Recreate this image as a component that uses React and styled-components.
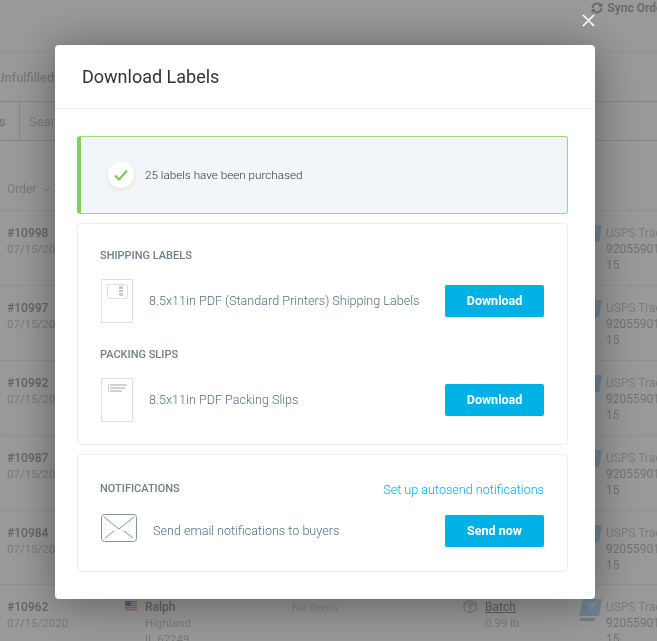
import React from "react";
import styled, { createGlobalStyle } from "styled-components";

const GlobalStyle = createGlobalStyle`
  html, body {
    margin: 0;
    height: 100%;
    overflow: hidden;
    background: #fff;
    font-family: "Roboto", "Liberation Sans", sans-serif;
  }
`;

const Page = styled.div`
  height: 641px;
  overflow: hidden;
  filter: blur(0.6px);
`;
const TopBar = styled.div`
  display: flex;
  justify-content: flex-end;
  gap: 4px;
  height: 52px;
  box-sizing: border-box;
  padding-top: 1px;
  border-bottom: 1px solid #f2f2f2;
  margin-right: -16px;
  font-size: 12px;
  line-height: 14px;
  font-weight: 700;
  color: #b0b0b0;
  white-space: nowrap;
`;
const Tabs = styled.div`
  height: 49px;
  padding-top: 18px;
  box-sizing: border-box;
  font-size: 13px;
  line-height: 16px;
  color: #c0c0c0;
  text-indent: -4px;
`;
const FilterBar = styled.div`
  display: flex;
  height: 40px;
  box-sizing: border-box;
  border-top: 1px solid #e2e2e2;
  border-bottom: 1px solid #e2e2e2;
  font-size: 13px;
  color: #d0d0d0;
`;
const FilterTab = styled.div`
  width: 20px;
  box-sizing: border-box;
  border-right: 1px solid #e2e2e2;
  line-height: 40px;
  color: #bbb;
  text-indent: -1px;
`;
const SearchText = styled.div`
  padding-left: 9px;
  line-height: 40px;
`;
const TableHead = styled.div`
  display: flex;
  height: 70px;
  box-sizing: border-box;
  padding: 40px 0 0 7px;
  font-size: 12px;
  line-height: 16px;
  color: #c8c8c8;
  border-bottom: 1px solid #efefef;
`;
const HeadCell = styled.span`
  display: flex;
  align-self: flex-start;
  align-items: center;
  gap: 6px;
`;
const Row = styled.div`
  display: grid;
  grid-template-columns: 118px 20px 147px 171px 22px 94px 27px 1fr;
  height: 74.9px;
  box-sizing: border-box;
  padding: 14px 0 0 7px;
  border-bottom: 1px solid #efefef;
  font-size: 11.5px;
  line-height: 16px;
  color: #cacaca;
  white-space: nowrap;
`;
const OrderNo = styled.div`
  font-size: 12px;
  font-weight: 500;
  color: #a8a8a8;
`;
const NoItems = styled.div`
  color: #d8d8d8;
`;
const Batch = styled.div`
  font-size: 12px;
  color: #a0a0a0;
  text-decoration: underline;
`;
const Tracking = styled.div`
  font-size: 12px;
  color: #cfcfcf;
`;
const TrackingNo = styled.div`
  font-size: 12px;
  color: #bdbdbd;
`;

const Overlay = styled.div`
  position: fixed;
  inset: 0;
  background: rgba(0, 0, 0, 0.4);
  display: flex;
  align-items: flex-start;
  padding: 45px 62px 0 55px;
  box-sizing: border-box;
`;
const Close = styled.button`
  position: absolute;
  top: 14px;
  right: 62px;
  width: 13px;
  height: 13px;
  padding: 0;
  border: 0;
  background: none;
  display: flex;
`;
const Modal = styled.div`
  width: 540px;
  height: 554px;
  background: #fff;
  border-radius: 4px;
  box-shadow: 0 4px 44px rgba(0, 0, 0, 0.42);
  overflow: hidden;
`;
const ModalHeader = styled.div`
  height: 64px;
  box-sizing: border-box;
  border-bottom: 1px solid #eef0f4;
  padding: 21px 27px 0;
`;
const Title = styled.h2`
  margin: 0;
  font-size: 18px;
  line-height: 22px;
  font-weight: 400;
  color: #333;
`;
const ModalBody = styled.div`
  padding: 27px 27px 0 22px;
  display: flex;
  flex-direction: column;
  gap: 9px;
`;
const Alert = styled.div`
  height: 78px;
  box-sizing: border-box;
  display: flex;
  align-items: center;
  gap: 11px;
  padding: 0 0 0 27px;
  background: #f1f6fa;
  border: 1px solid #99dc6c;
  border-left: 4px solid #86d04f;
  border-radius: 3px;
  font-size: 11.7px;
  font-weight: 300;
  color: #333;
`;
const AlertText = styled.span`
  margin-bottom: 1px;
`;
const CheckCircle = styled.div`
  width: 26px;
  height: 26px;
  border-radius: 50%;
  background: #fff;
  display: flex;
  align-items: center;
  justify-content: center;
  box-shadow: 0 2px 4px rgba(240, 200, 150, 0.45);
`;
const Card = styled.div`
  border: 1px solid #eeeeee;
  border-radius: 4px;
  padding: ${(p) => p.$pad}px 23px 0;
  box-sizing: border-box;
  height: ${(p) => p.$height}px;
`;
const SectionHead = styled.div`
  display: flex;
  justify-content: space-between;
  align-items: center;
  height: 18px;
  margin-top: ${(p) => p.$top || 0}px;
`;
const SectionLabel = styled.div`
  font-size: 11px;
  line-height: 18px;
  font-weight: 500;
  color: #6f818c;
  text-transform: uppercase;
  margin-left: -1px;
`;
const AutoLink = styled.a`
  font-size: 12.6px;
  font-weight: 300;
  color: #00b1e6;
`;
const ItemRow = styled.div`
  display: flex;
  align-items: center;
  height: ${(p) => p.$height}px;
  margin-top: ${(p) => p.$top}px;
`;
const Doc = styled.svg`
  flex: none;
  margin-right: 16px;
`;
const Mail = styled.svg`
  flex: none;
  margin: 0 16px 7px 0;
`;
const ItemText = styled.div`
  flex: 1;
  font-size: 12.6px;
  font-weight: 300;
  color: #4f7285;
  white-space: nowrap;
  margin-bottom: 2px;
`;
const Action = styled.button`
  flex: none;
  width: 99px;
  height: 32px;
  padding: 0 0 2px;
  border: 0;
  border-radius: 2px;
  background: #00b1e6;
  color: #fff;
  font-family: inherit;
  font-size: 12.5px;
  font-weight: 700;
`;

const orders = ["#10998", "#10997", "#10992", "#10987", "#10984", "#10962"];

const Flag = () => (
  <svg width="12" height="10" viewBox="0 0 12 10" style={{ marginTop: 2 }}>
    <rect width="12" height="10" fill="#e8b4b4" />
    <path d="M0 1.5h12M0 3.5h12M0 5.5h12M0 7.5h12M0 9.5h12" stroke="#f2e6e6" />
    <rect width="6" height="5" fill="#9c9cc8" />
  </svg>
);

const UspsLogo = () => (
  <svg width="23" height="23" viewBox="0 0 23 23">
    <path d="M4 0h19l-3 17H0z" fill="#b6e0ff" />
    <path d="M6 5l13-2-9 10 2-6z" fill="#e4eef4" />
    <rect x="1" y="19" width="15" height="3" fill="#c6d4de" />
  </svg>
);

const ShippingDoc = () => (
  <Doc width="32" height="44" viewBox="0 0 32 44" fill="none">
    <rect x="0.5" y="0.5" width="31" height="43" stroke="#dde1e5" />
    <rect x="6.5" y="5.5" width="20" height="14" rx="1" stroke="#dde1e5" />
    <rect x="18" y="7" width="4" height="3" fill="#c4c9ce" />
    <rect x="18" y="11" width="4" height="2" fill="#c4c9ce" />
    <rect x="18" y="14" width="4" height="3" fill="#c4c9ce" />
  </Doc>
);

const PackingDoc = () => (
  <Doc width="32" height="44" viewBox="0 0 32 44" fill="none">
    <rect x="0.5" y="0.5" width="31" height="43" stroke="#dde1e5" />
    <rect x="7" y="6" width="1" height="8" fill="#cdd1d5" />
    <path d="M9 6h17v2H9zM9 9h15v2H9zM9 12h12v2H9z" fill="#cdd1d5" />
  </Doc>
);

export default function App() {
  return (
    <>
      <GlobalStyle />
      <Page>
        <TopBar>
          <svg width="12" height="12" viewBox="0 0 24 24" fill="none" stroke="#b0b0b0" strokeWidth="3.5" style={{ marginTop: 1 }}>
            <path d="M21 12a9 9 0 0 1-15 6.7L3 16M3 12a9 9 0 0 1 15-6.7L21 8" />
            <path d="M21 3v5h-5M3 21v-5h5" />
          </svg>
          Sync Orders
        </TopBar>
        <Tabs>Unfulfilled</Tabs>
        <FilterBar>
          <FilterTab>s</FilterTab>
          <SearchText>Search</SearchText>
        </FilterBar>
        <TableHead>
          <HeadCell>
            Order
            <svg width="8" height="5" viewBox="0 0 8 5" fill="none" stroke="#c8c8c8">
              <path d="M0.5 0.5L4 4l3.5-3.5" />
            </svg>
          </HeadCell>
        </TableHead>
        {orders.map((id) => {
          const last = id === "#10962";
          return (
            <Row key={id}>
              <div>
                <OrderNo>{id}</OrderNo>
                <div>07/15/2020</div>
              </div>
              <div>{last && <Flag />}</div>
              <div>
                {last && (
                  <>
                    <OrderNo>Ralph</OrderNo>
                    <div>Highland</div>
                    <div>IL 62249</div>
                  </>
                )}
              </div>
              <div>{last && <NoItems>No items</NoItems>}</div>
              <div>
                {last && (
                  <svg width="14" height="15" viewBox="0 0 14 15" fill="none" stroke="#c0c0c0">
                    <path d="M7 1l6 3v7l-6 3-6-3V4zM1 4l6 3 6-3M7 7v7M4 2.5l6 3" />
                  </svg>
                )}
              </div>
              <div>
                {last && (
                  <>
                    <Batch>Batch</Batch>
                    <div>0.99 lb</div>
                  </>
                )}
              </div>
              <div>
                <UspsLogo />
              </div>
              <div>
                <Tracking>USPS Tracking</Tracking>
                <TrackingNo>92055901</TrackingNo>
                <TrackingNo>15</TrackingNo>
              </div>
            </Row>
          );
        })}
      </Page>
      <Overlay>
        <Close aria-label="Close">
          <svg width="13" height="13" viewBox="0 0 13 13" stroke="#fff" strokeWidth="1.7">
            <path d="M1 1l11 11M12 1L1 12" />
          </svg>
        </Close>
        <Modal>
          <ModalHeader>
            <Title>Download Labels</Title>
          </ModalHeader>
          <ModalBody>
            <Alert>
              <CheckCircle>
                <svg width="14" height="12" viewBox="0 0 14 12" fill="none" stroke="#7cc650" strokeWidth="2">
                  <path d="M1 6.5L5 10.5L13 1.5" />
                </svg>
              </CheckCircle>
              <AlertText>25 labels have been purchased</AlertText>
            </Alert>
            <Card $height={222} $pad={23}>
              <SectionHead>
                <SectionLabel>Shipping Labels</SectionLabel>
              </SectionHead>
              <ItemRow $top={14} $height={44}>
                <ShippingDoc />
                <ItemText>8.5x11in PDF (Standard Printers) Shipping Labels</ItemText>
                <Action>Download</Action>
              </ItemRow>
              <SectionHead $top={23}>
                <SectionLabel>Packing Slips</SectionLabel>
              </SectionHead>
              <ItemRow $top={14} $height={44}>
                <PackingDoc />
                <ItemText>8.5x11in PDF Packing Slips</ItemText>
                <Action>Download</Action>
              </ItemRow>
            </Card>
            <Card $height={118} $pad={25}>
              <SectionHead>
                <SectionLabel>Notifications</SectionLabel>
                <AutoLink>Set up autosend notifications</AutoLink>
              </SectionHead>
              <ItemRow $top={17} $height={32}>
                <Mail width="36" height="28" viewBox="0 0 36 28" fill="none" stroke="#7d95a3">
                  <rect x="0.5" y="0.5" width="35" height="27" rx="3" />
                  <path d="M3 3l15 12L33 3M4 24l9-7M32 24l-9-7" />
                </Mail>
                <ItemText>Send email notifications to buyers</ItemText>
                <Action>Send now</Action>
              </ItemRow>
            </Card>
          </ModalBody>
        </Modal>
      </Overlay>
    </>
  );
}
